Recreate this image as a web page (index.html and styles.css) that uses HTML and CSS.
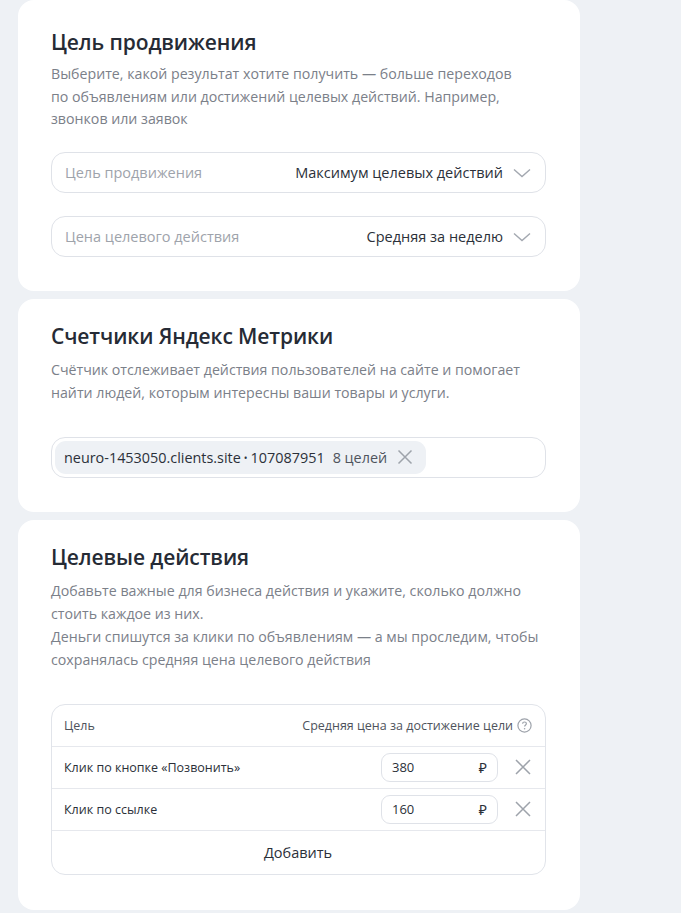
FILE: index.html
```html
<!DOCTYPE html>
<html lang="ru">
<head>
<meta charset="utf-8">
<link rel="stylesheet" href="styles.css">
</head>
<body>
<div class="page">
  <section class="card card-goal">
    <h2 class="title">Цель продвижения</h2>
    <p class="desc">Выберите, какой результат хотите получить — больше переходов<br>по объявлениям или достижений целевых действий. Например,<br>звонков или заявок</p>
    <div class="selects">
      <div class="select">
        <span class="select-label">Цель продвижения</span>
        <span class="select-value">Максимум целевых действий</span>
        <svg class="chevron" width="18" height="10" viewBox="0 0 18 10"><path d="M1 1.5 L9 8.5 L17 1.5" fill="none" stroke="#a3a8b0" stroke-width="1.4"/></svg>
      </div>
      <div class="select">
        <span class="select-label">Цена целевого действия</span>
        <span class="select-value">Средняя за неделю</span>
        <svg class="chevron" width="18" height="10" viewBox="0 0 18 10"><path d="M1 1.5 L9 8.5 L17 1.5" fill="none" stroke="#a3a8b0" stroke-width="1.4"/></svg>
      </div>
    </div>
  </section>

  <section class="card card-metrika">
    <h2 class="title">Счетчики Яндекс Метрики</h2>
    <p class="desc">Счётчик отслеживает действия пользователей на сайте и помогает<br>найти людей, которым интересны ваши товары и услуги.</p>
    <div class="tag-field">
      <div class="chip">
        <span class="chip-name">neuro-1453050.clients.site<span class="dot">•</span>107087951</span>
        <span class="chip-count">8 целей</span>
        <svg class="chip-x" width="16" height="16" viewBox="0 0 16 16"><path d="M1.5 1.5 L14.5 14.5 M14.5 1.5 L1.5 14.5" stroke="#9ea3ab" stroke-width="1.5" fill="none"/></svg>
      </div>
    </div>
  </section>

  <section class="card card-actions">
    <h2 class="title">Целевые действия</h2>
    <p class="desc">Добавьте важные для бизнеса действия и укажите, сколько должно<br>стоить каждое из них.<br>Деньги спишутся за клики по объявлениям — а мы проследим, чтобы<br>сохранялась средняя цена целевого действия</p>
    <div class="table">
      <div class="row head">
        <span class="cell-name">Цель</span>
        <span class="head-price">Средняя цена за достижение цели
          <svg class="help" width="15" height="15" viewBox="0 0 15 15"><circle cx="7.5" cy="7.5" r="6.6" fill="none" stroke="#9ea3ab" stroke-width="1.2"/><path d="M5.6 5.8 C5.6 4.6 6.5 4 7.5 4 C8.6 4 9.4 4.7 9.4 5.7 C9.4 6.9 7.6 7 7.6 8.6" fill="none" stroke="#9ea3ab" stroke-width="1.2"/><circle cx="7.6" cy="10.8" r="0.8" fill="#9ea3ab"/></svg>
        </span>
      </div>
      <div class="row">
        <span class="cell-name">Клик по кнопке «Позвонить»</span>
        <div class="price-input"><span>380</span><span class="rub">₽</span></div>
        <svg class="row-x" width="16" height="16" viewBox="0 0 16 16"><path d="M1 1 L15 15 M15 1 L1 15" stroke="#9ea3ab" stroke-width="1.5" fill="none"/></svg>
      </div>
      <div class="row">
        <span class="cell-name">Клик по ссылке</span>
        <div class="price-input"><span>160</span><span class="rub">₽</span></div>
        <svg class="row-x" width="16" height="16" viewBox="0 0 16 16"><path d="M1 1 L15 15 M15 1 L1 15" stroke="#9ea3ab" stroke-width="1.5" fill="none"/></svg>
      </div>
      <div class="row add">Добавить</div>
    </div>
  </section>
</div>
</body>
</html>
```

FILE: styles.css
```css
* { box-sizing: border-box; }
html, body {
  margin: 0;
  padding: 0;
  background: #eef1f5;
}
body {
  font-family: "Open Sans", "Noto Sans", sans-serif;
  color: #22262e;
  width: 681px;
  height: 913px;
  overflow: hidden;
}
.page {
  display: flex;
  flex-direction: column;
  gap: 8px;
  width: 562px;
  margin-left: 18px;
}
.card {
  background: #fff;
  border-radius: 16px;
  padding: 23px 34px 33px 33px;
}
.card-goal { padding-top: 28px; padding-bottom: 34px; }
.title {
  margin: 0;
  font-size: 21px;
  line-height: 28px;
  font-weight: 600;
  color: #262b35;
  letter-spacing: -0.1px;
}
.desc {
  margin: 7px 0 0;
  font-size: 14.2px;
  line-height: 22.7px;
  color: #7b8089;
}
.selects {
  margin-top: 21px;
  display: flex;
  flex-direction: column;
  gap: 23px;
}
.select {
  height: 41px;
  border: 1px solid #dfe2e8;
  border-radius: 14px;
  display: flex;
  align-items: center;
  padding: 0 14px 0 13px;
  font-size: 14.5px;
}
.select-label {
  color: #9ea3ab;
  flex: 1;
}
.select-value {
  color: #2b3039;
  margin-right: 10px;
}
.chevron { display: block; }

.card-metrika { padding-bottom: 34px; }
.card-metrika .desc { margin-top: 9px; }
.tag-field {
  margin-top: 32px;
  height: 41px;
  border: 1px solid #dfe2e8;
  border-radius: 14px;
  padding: 3px;
  display: flex;
  align-items: center;
}
.chip {
  height: 33px;
  background: #eef1f5;
  border-radius: 11px;
  display: flex;
  align-items: center;
  padding: 0 13px 0 9px;
  font-size: 14.4px;
  color: #2b3039;
}
.dot {
  font-size: 10px;
  margin: 0 3px;
  position: relative;
  top: -1px;
}
.chip-count {
  margin-left: 8px;
  color: #4f545d;
}
.chip-x { margin-left: 10px; display: block; }

.card-actions { padding-bottom: 35px; }
.card-actions .desc { line-height: 23px; margin-top: 8px; }
.table {
  margin-top: 33px;
  border: 1px solid #e1e4ea;
  border-radius: 14px;
}
.row {
  height: 42px;
  display: flex;
  align-items: center;
  padding: 0 13px 0 12px;
  font-size: 12.5px;
  color: #2b3039;
  border-bottom: 1px solid #e6e8ed;
}
.row:last-child { border-bottom: none; }
.row.head { color: #4e535c; }
.cell-name { flex: 1; }
.head-price {
  display: flex;
  align-items: center;
  gap: 4px;
}
.help { display: block; }
.price-input {
  width: 117px;
  height: 29px;
  border: 1px solid #dfe2e8;
  border-radius: 9px;
  display: flex;
  align-items: center;
  justify-content: space-between;
  padding: 0 10px 0 10px;
  font-size: 13px;
  color: #2b3039;
}
.rub { font-size: 14px; }
.row-x { margin-left: 17px; margin-right: 1px; display: block; }
.row.add {
  justify-content: center;
  font-size: 14.5px;
  height: 43px;
}
```
